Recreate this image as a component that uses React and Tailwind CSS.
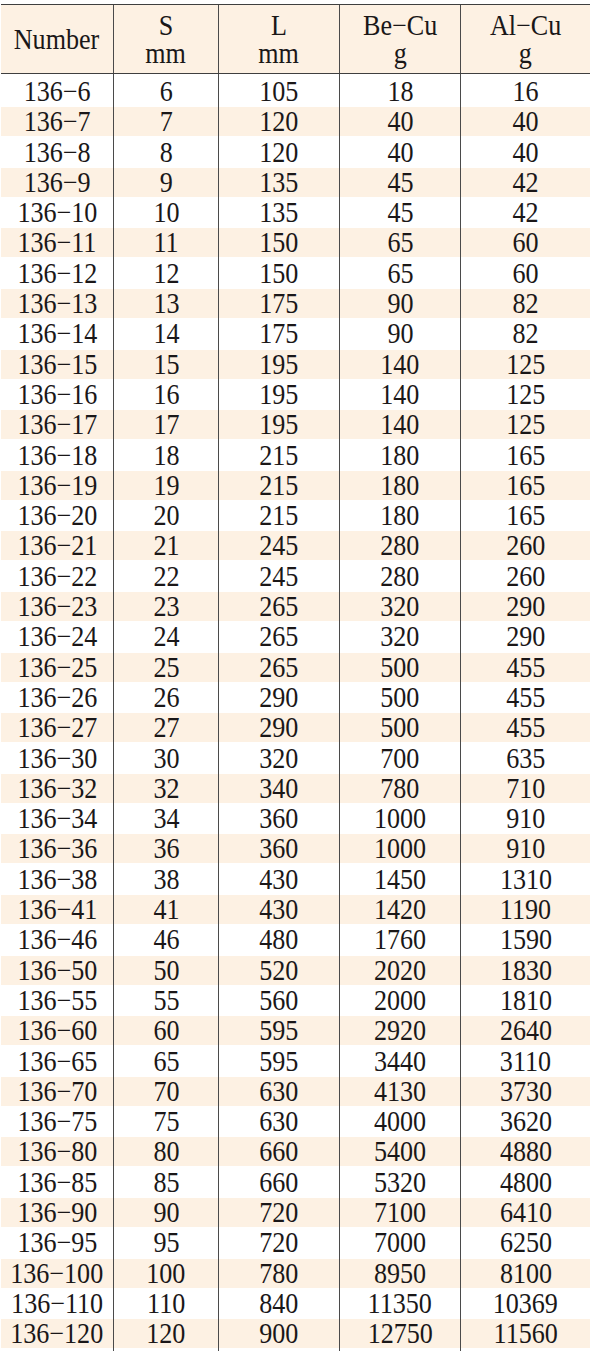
import React from 'react';

const rows = [
  ['136−6', 6, 105, 18, 16],
  ['136−7', 7, 120, 40, 40],
  ['136−8', 8, 120, 40, 40],
  ['136−9', 9, 135, 45, 42],
  ['136−10', 10, 135, 45, 42],
  ['136−11', 11, 150, 65, 60],
  ['136−12', 12, 150, 65, 60],
  ['136−13', 13, 175, 90, 82],
  ['136−14', 14, 175, 90, 82],
  ['136−15', 15, 195, 140, 125],
  ['136−16', 16, 195, 140, 125],
  ['136−17', 17, 195, 140, 125],
  ['136−18', 18, 215, 180, 165],
  ['136−19', 19, 215, 180, 165],
  ['136−20', 20, 215, 180, 165],
  ['136−21', 21, 245, 280, 260],
  ['136−22', 22, 245, 280, 260],
  ['136−23', 23, 265, 320, 290],
  ['136−24', 24, 265, 320, 290],
  ['136−25', 25, 265, 500, 455],
  ['136−26', 26, 290, 500, 455],
  ['136−27', 27, 290, 500, 455],
  ['136−30', 30, 320, 700, 635],
  ['136−32', 32, 340, 780, 710],
  ['136−34', 34, 360, 1000, 910],
  ['136−36', 36, 360, 1000, 910],
  ['136−38', 38, 430, 1450, 1310],
  ['136−41', 41, 430, 1420, 1190],
  ['136−46', 46, 480, 1760, 1590],
  ['136−50', 50, 520, 2020, 1830],
  ['136−55', 55, 560, 2000, 1810],
  ['136−60', 60, 595, 2920, 2640],
  ['136−65', 65, 595, 3440, 3110],
  ['136−70', 70, 630, 4130, 3730],
  ['136−75', 75, 630, 4000, 3620],
  ['136−80', 80, 660, 5400, 4880],
  ['136−85', 85, 660, 5320, 4800],
  ['136−90', 90, 720, 7100, 6410],
  ['136−95', 95, 720, 7000, 6250],
  ['136−100', 100, 780, 8950, 8100],
  ['136−110', 110, 840, 11350, 10369],
  ['136−120', 120, 900, 12750, 11560],
];

const headers = [['Number'], ['S', 'mm'], ['L', 'mm'], ['Be−Cu', 'g'], ['Al−Cu', 'g']];

const cols = 'grid grid-cols-[113px_105px_121px_121px_129px]';

export default function App() {
  return (
    <div className="w-[593px] h-[1351px] bg-white pt-[4px] font-['Liberation_Serif','Times_New_Roman',serif] text-[29px] text-[#1a1718]">
      <div className="ml-[1px] w-[589px] border-t-[1.5px] border-b-[1.5px] border-[#3f3f3f]">
        {/* header */}
        <div className={`${cols} h-[68.5px] border-b-[1.5px] border-[#3f3f3f] bg-[#fdf1e3]`}>
          {headers.map((h, i) => (
            <div
              key={i}
              className={`flex flex-col items-center justify-center pt-[1px] leading-[28px] ${i < 4 ? 'border-r-[1.5px] border-[#4a4a4a]' : ''}`}
            >
              {h.map((line) => (
                <span key={line} className="inline-block scale-x-[0.9]">{line}</span>
              ))}
            </div>
          ))}
        </div>

        {/* data rows */}
        {rows.map((r, ri) => (
          <div key={r[0]} className={`${cols} h-[30.31px]`}>
            {r.map((v, ci) => (
              <div
                key={ci}
                className={`flex items-center justify-center py-[3.5px] leading-none ${ri % 2 === 1 ? 'bg-[#fdf1e3] bg-clip-content' : ''} ${ci < 4 ? 'border-r-[1.5px] border-[#4a4a4a]' : ''}`}
              >
                <span className="inline-block scale-x-[0.9]">{v}</span>
              </div>
            ))}
          </div>
        ))}
      </div>
    </div>
  );
}
